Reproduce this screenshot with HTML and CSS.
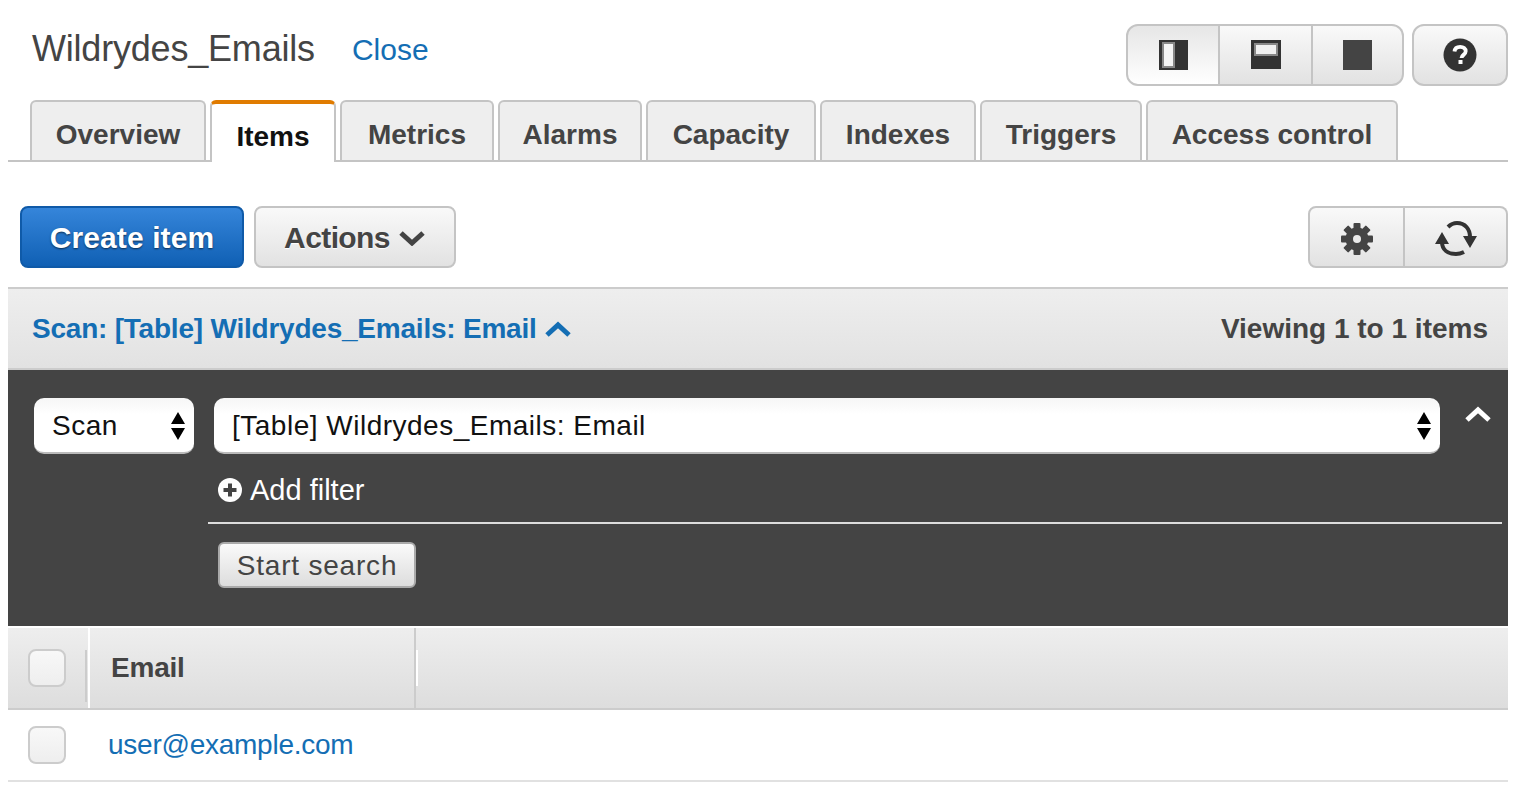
FILE: index.html
```html
<!DOCTYPE html>
<html lang="en">
<head>
    <meta charset="UTF-8">
    <title>Wildrydes_Emails</title>
    <link rel="stylesheet" href="styles.css">
</head>
<body>
    <div class="page">
        <!-- Title row -->
        <div class="title-row">
            <h1 class="table-name">Wildrydes_Emails</h1>
            <a class="close-link" href="#">Close</a>
            <div class="view-switch">
                <button class="btn view-btn view-btn-active">
                    <svg width="30" height="30" viewBox="0 0 30 30"><rect x="1" width="29" height="30" fill="#333"/><rect x="5" y="3" width="11" height="24" fill="#f4f4f4" stroke="#888" stroke-width="2"/></svg>
                </button>
                <button class="btn view-btn">
                    <svg width="30" height="30" viewBox="0 0 30 30"><rect width="30" height="29" fill="#333"/><rect x="4" y="4" width="22" height="11" fill="#f0f0f0" stroke="#888" stroke-width="2"/></svg>
                </button>
                <button class="btn view-btn">
                    <svg width="30" height="30" viewBox="0 0 30 30"><rect width="29" height="30" fill="#444"/></svg>
                </button>
            </div>
            <button class="btn help-btn">
                <svg width="34" height="34" viewBox="0 0 34 34"><circle cx="17" cy="17" r="16.5" fill="#333"/><path d="M11.5 13.5c.3-3.2 2.600-4.700 5.700-4.700 3.200 0 5.500 1.700 5.500 4.400 0 3.800-4.200 3.500-4.200 6.800" fill="none" stroke="#fff" stroke-width="3.800"/><rect x="15.500" y="22" width="4" height="4" fill="#fff"/></svg>
            </button>
        </div>

        <!-- Tabs -->
        <div class="tabs">
            <a class="tab" href="#">Overview</a>
            <a class="tab tab-active" href="#">Items</a>
            <a class="tab" href="#">Metrics</a>
            <a class="tab" href="#">Alarms</a>
            <a class="tab" href="#">Capacity</a>
            <a class="tab" href="#">Indexes</a>
            <a class="tab" href="#">Triggers</a>
            <a class="tab" href="#">Access control</a>
        </div>

        <!-- Toolbar -->
        <div class="toolbar">
            <button class="btn btn-primary">Create item</button>
            <button class="btn btn-actions">Actions
                <svg class="chevron" width="28" height="16" viewBox="0 0 28 16"><path d="M3 3l11 10L25 3" fill="none" stroke="#444" stroke-width="5"/></svg>
            </button>
            <div class="tool-group">
                <button class="btn tool-btn">
                    <svg class="tool-icon" width="32" height="34" viewBox="0 0 32 34">
                        <g fill="#444" transform="translate(16 17)">
                            <rect x="-3.500" y="-16" width="7" height="32" rx="1"/>
                            <rect x="-3.500" y="-16" width="7" height="32" rx="1" transform="rotate(45)"/>
                            <rect x="-3.500" y="-16" width="7" height="32" rx="1" transform="rotate(90)"/>
                            <rect x="-3.500" y="-16" width="7" height="32" rx="1" transform="rotate(135)"/>
                            <circle r="11.500"/>
                            <circle r="4" fill="#e9e9e9"/>
                        </g>
                    </svg>
                </button>
                <button class="btn tool-btn tool-btn-wide">
                    <svg class="tool-icon" width="44" height="38" viewBox="0 0 44 38" fill="none">
                        <path d="M8 22C8 30 14 34 22 34 25 34 28 33 30 32" stroke="#333" stroke-width="4"/>
                        <path d="M14 7C17 4 20 3 23 3 31 3 36 9 36 17" stroke="#333" stroke-width="4"/>
                        <path d="M8 12l7 12H1zM36 28l-7-12h14z" fill="#333"/>
                    </svg>
                </button>
            </div>
        </div>

        <!-- Scan summary bar -->
        <div class="scan-bar">
            <a class="scan-link" href="#">Scan: [Table] Wildrydes_Emails: Email
                <svg width="28" height="16" viewBox="0 0 28 16"><path d="M3 14L14 4l11 10" fill="none" stroke="#146eb4" stroke-width="5"/></svg>
            </a>
            <span class="viewing">Viewing 1 to 1 items</span>
        </div>

        <!-- Search panel -->
        <div class="search-panel">
            <div class="fake-select select-type">Scan
                <svg width="16" height="28" viewBox="0 0 16 28"><path d="M8 0l7 12H1zM8 28L1 16h14z" fill="#000"/></svg>
            </div>
            <div class="search-main">
                <div class="search-top">
                    <div class="fake-select select-index">[Table] Wildrydes_Emails: Email
                        <svg width="16" height="28" viewBox="0 0 16 28"><path d="M8 0l7 12H1zM8 28L1 16h14z" fill="#000"/></svg>
                    </div>
                    <svg class="collapse" width="28" height="18" viewBox="0 0 28 18"><path d="M3 14L14 4l11 10" fill="none" stroke="#fff" stroke-width="5"/></svg>
                </div>
                <div class="add-filter">
                    <svg width="24" height="24" viewBox="0 0 24 24"><circle cx="12" cy="12" r="12" fill="#fff"/><path d="M12 5.500v13M5.500 12h13" stroke="#444" stroke-width="4"/></svg>
                    Add filter
                </div>
                <div class="search-actions">
                    <button class="start-search">Start search</button>
                </div>
            </div>
        </div>

        <!-- Items table -->
        <table class="items">
            <thead>
                <tr>
                    <th class="col-check"><span class="checkbox"></span></th>
                    <th class="col-email">Email</th>
                    <th class="col-rest"></th>
                </tr>
            </thead>
            <tbody>
                <tr>
                    <td class="col-check"><span class="checkbox"></span></td>
                    <td class="col-email"><a href="#">user@example.com</a></td>
                    <td class="col-rest"></td>
                </tr>
            </tbody>
        </table>
    </div>
</body>
</html>
```

FILE: styles.css
```css
* {
    box-sizing: border-box;
}
body {
    margin: 0;
    background: #fff;
    color: #444;
    font-family: "Liberation Sans", Arial, sans-serif;
}
a {
    color: #146eb4;
    text-decoration: none;
}
.page {
    width: 1500px;
    height: 802px;
    margin-left: 8px;
    overflow: hidden;
}

/* Shared button look */
.btn {
    display: flex;
    align-items: center;
    justify-content: center;
    padding: 0;
    border: 2px solid #c4c4c4;
    border-radius: 8px;
    background: linear-gradient(#f9f9f9, #e2e2e2);
    color: #444;
    font-family: inherit;
    font-weight: bold;
    font-size: 28px;
}

/* Title row */
.title-row {
    display: flex;
    align-items: flex-start;
    height: 100px;
    padding-top: 24px;
    padding-left: 24px;
}
.table-name {
    margin: 0;
    font-size: 36px;
    line-height: 50px;
    font-weight: normal;
    color: #444;
    letter-spacing: -0.2px;
}
.close-link {
    margin-left: 37px;
    font-size: 30px;
    line-height: 52px;
}
.view-switch {
    display: flex;
    margin-left: auto;
}
.view-btn {
    width: 93px;
    height: 62px;
    border-radius: 0;
    border-left-width: 0;
}
.view-btn:first-child {
    width: 94px;
    border-left-width: 2px;
    border-radius: 12px 0 0 12px;
}
.view-btn:last-child {
    width: 91px;
    border-radius: 0 12px 12px 0;
}
.view-btn-active {
    background: linear-gradient(#e6e6e6, #fff);
}
.help-btn {
    width: 96px;
    height: 62px;
    margin-left: 8px;
    border-radius: 12px;
}

/* Tabs */
.tabs {
    display: grid;
    grid-template-columns: 176px 126px 154px 144px 170px 156px 162px 252px;
    gap: 4px;
    height: 62px;
    padding-left: 22px;
    border-bottom: 2px solid #c4c4c4;
}
.tab {
    height: 60px;
    border: 2px solid #c4c4c4;
    border-bottom: 0;
    border-radius: 6px 6px 0 0;
    background: #eee;
    color: #444;
    font-size: 28px;
    font-weight: bold;
    line-height: 66px;
    text-align: center;
}
.tab-active {
    height: 62px;
    border-top: 4px solid #e07b00;
    background: #fff;
    color: #111;
    line-height: 66px;
}

/* Toolbar */
.toolbar {
    display: flex;
    height: 125px;
    padding: 44px 0 0 12px;
}
.btn-primary {
    width: 224px;
    height: 62px;
    padding-top: 2px;
    border-color: #0f5aa8;
    background: linear-gradient(#3585da, #1060b4);
    color: #fff;
    font-size: 30px;
    letter-spacing: 0.1px;
    text-shadow: 0 1px 2px rgba(0, 0, 0, 0.6);
}
.btn-actions {
    width: 202px;
    height: 62px;
    margin-left: 10px;
    padding-top: 2px;
    font-size: 30px;
    letter-spacing: -0.6px;
    text-shadow: 0 1px 1px #fff;
}
.chevron {
    margin-left: 8px;
}
.tool-group {
    display: flex;
    margin-left: auto;
}
.tool-btn {
    width: 97px;
    height: 62px;
    border-radius: 8px 0 0 8px;
}
.tool-btn-wide {
    width: 103px;
    border-left-width: 0;
    border-radius: 0 8px 8px 0;
}
.tool-icon {
    margin-top: 4px;
}

/* Scan bar */
.scan-bar {
    display: flex;
    align-items: center;
    justify-content: space-between;
    height: 83px;
    padding: 0 20px 0 24px;
    border-top: 2px solid #ccc;
    border-bottom: 2px solid #ccc;
    background: linear-gradient(#eee, #e2e2e2);
}
.scan-link {
    display: flex;
    align-items: center;
    gap: 7px;
    font-size: 28px;
    font-weight: bold;
    letter-spacing: -0.22px;
}
.viewing {
    font-size: 28px;
    font-weight: bold;
}

/* Search panel */
.search-panel {
    display: flex;
    height: 256px;
    padding: 28px 6px 0 26px;
    background: #444;
    color: #fff;
}
.fake-select {
    display: flex;
    align-items: center;
    justify-content: space-between;
    height: 56px;
    padding: 2px 8px 0 18px;
    border-radius: 10px;
    border-bottom: 2px solid #bbb;
    background: linear-gradient(#f6f6f6, #fff 30%);
    color: #111;
    font-size: 28px;
    letter-spacing: 0.5px;
}
.select-type {
    width: 160px;
}
.search-main {
    flex: 1;
    margin-left: 14px;
}
.search-top {
    display: flex;
    align-items: flex-start;
    padding-left: 6px;
}
.select-index {
    width: 1226px;
}
.collapse {
    margin-left: 24px;
    margin-top: 8px;
}
.add-filter {
    display: flex;
    align-items: center;
    gap: 8px;
    height: 70px;
    padding: 4px 0 0 10px;
    border-bottom: 2px solid #ddd;
    font-size: 29px;
}
.search-actions {
    padding: 18px 0 0 10px;
}
.start-search {
    width: 198px;
    height: 46px;
    padding: 2px 0 0;
    border: 2px solid #aaa;
    border-radius: 6px;
    background: linear-gradient(#fafafa, #ddd);
    color: #444;
    font-family: inherit;
    font-size: 28px;
    letter-spacing: 0.8px;
    line-height: 40px;
}

/* Items table */
.items {
    width: 100%;
    margin-top: 2px;
    border-collapse: collapse;
    table-layout: fixed;
}
.items th {
    position: relative;
    height: 81px;
    padding: 0;
    border-bottom: 2px solid #ccc;
    background: linear-gradient(#eee, #ddd);
    font-size: 28px;
    text-align: left;
}
.items td {
    height: 72px;
    padding: 0;
    border-bottom: 2px solid #e1e1e1;
    font-size: 28px;
}
.items th.col-check, .items td.col-check {
    width: 81px;
    padding-left: 20px;
}
.items .col-email {
    width: 326px;
}
.items th.col-email {
    padding-left: 21px;
    border-left: 2px solid #fff;
    border-right: 2px solid #ccc;
    letter-spacing: -0.2px;
}
.items td.col-email {
    padding-left: 19px;
    letter-spacing: -0.25px;
}
/* Short divider ticks beside the header cells */
.items th.col-check::after {
    content: "";
    position: absolute;
    right: 1px;
    top: 22px;
    bottom: 6px;
    width: 2px;
    background: #ccc;
}
.items th.col-rest::before {
    content: "";
    position: absolute;
    left: 0;
    top: 22px;
    height: 36px;
    width: 2px;
    background: #fff;
}
.checkbox {
    display: block;
    width: 38px;
    height: 38px;
    border: 2px solid #ccc;
    border-radius: 8px;
    background: linear-gradient(#f8f8f8, #eee);
}
```
